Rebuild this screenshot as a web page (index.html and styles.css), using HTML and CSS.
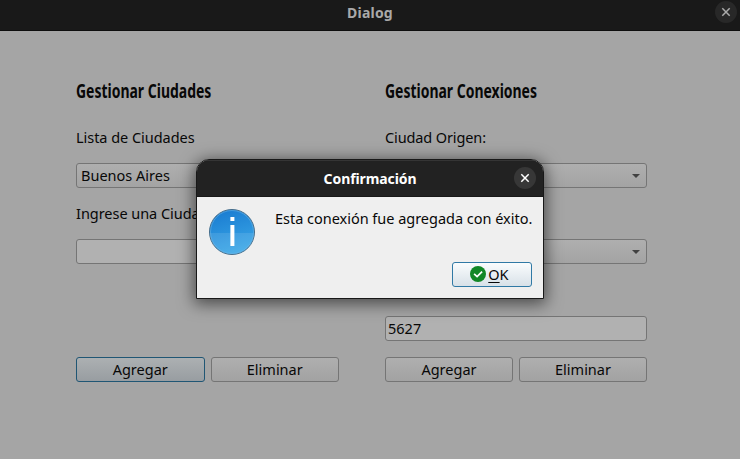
FILE: index.html
```
<!DOCTYPE html>
<html lang="es">
<head>
<meta charset="utf-8">
<title>Dialog</title>
<link rel="stylesheet" href="styles.css">
</head>
<body>
<div class="window">
  <header class="titlebar">
    <span class="window-title">Dialog</span>
    <span class="close"><svg width="22" height="22" viewBox="0 0 22 22"><path d="M7.3 7.3l7.4 7.4M14.7 7.3l-7.4 7.4"/></svg></span>
  </header>
  <main class="content">
    <section class="panel">
      <h2><span>Gestionar Ciudades</span></h2>
      <div class="label">Lista de Ciudades</div>
      <div class="field combo"><span>Buenos Aires</span></div>
      <div class="label second">Ingrese una Ciudad</div>
      <div class="field"></div>
      <div class="actions">
        <button class="focused"><span>Agregar</span></button>
        <button><span>Eliminar</span></button>
      </div>
    </section>
    <section class="panel">
      <h2><span>Gestionar Conexiones</span></h2>
      <div class="label origin">Ciudad Origen:</div>
      <div class="field combo"><i class="arrow"></i></div>
      <div class="label second"></div>
      <div class="field combo"><i class="arrow"></i></div>
      <div class="field distance"><span>5627</span></div>
      <div class="actions">
        <button><span>Agregar</span></button>
        <button><span>Eliminar</span></button>
      </div>
    </section>
  </main>
</div>
<div class="modal">
  <header class="modal-title">
    <span>Confirmación</span>
    <span class="close"><svg width="22" height="22" viewBox="0 0 22 22"><path d="M7.3 7.3l7.4 7.4M14.7 7.3l-7.4 7.4"/></svg></span>
  </header>
  <div class="modal-body">
    <svg class="info" width="48" height="48" viewBox="0 0 48 48">
      <defs>
        <linearGradient id="blue" x1="0" y1="0" x2="0.3" y2="1"><stop offset="0" stop-color="#1778cf"/><stop offset="1" stop-color="#38a5e6"/></linearGradient>
        <clipPath id="disc"><circle cx="24" cy="24" r="22.3"/></clipPath>
      </defs>
      <circle cx="24" cy="24" r="22.5" fill="url(#blue)" stroke="#456c89"/>
      <rect x="1" y="25" width="46" height="23" fill="#fff" opacity=".1" clip-path="url(#disc)"/>
      <circle cx="24" cy="24" r="21.5" fill="none" stroke="#70b9ec" stroke-opacity=".5"/>
      <path d="M22.4 9h4v4h-4zM22.4 17h4v21h-4z" fill="#fff"/>
    </svg>
    <div class="message">Esta conexión fue agregada con éxito.</div>
    <button class="ok">
      <svg width="16" height="16" viewBox="0 0 16 16"><circle cx="8" cy="8" r="8" fill="#128726"/><path d="M4.1 7.8l3 2.8 5-5" fill="none" stroke="#fff" stroke-width="1.7"/></svg>
      <span><span class="mnemonic">O</span>K</span>
    </button>
  </div>
</div>
</body>
</html>
```

FILE: styles.css
```
* { box-sizing: border-box; }
body {
  margin: 0;
  width: 740px;
  height: 459px;
  overflow: hidden;
  font: 14.5px/20px "Noto Sans", "Open Sans", sans-serif;
  color: #080808;
}
.window { height: 459px; background: #a5a5a5; }
.titlebar {
  position: relative;
  height: 31px;
  padding-top: 3px;
  background: #191919;
  border-bottom: 1px solid #0e0e0e;
  color: #a9a9a9;
  font-weight: 700;
  font-size: 14px;
  text-align: center;
}
.window-title { letter-spacing: .2px; }
.close {
  position: absolute;
  top: 1px;
  right: 3px;
  width: 22px;
  height: 22px;
  border-radius: 50%;
  background: #282828;
}
.close svg { display: block; fill: none; stroke: #ababab; stroke-width: 1.5; }
.content {
  display: grid;
  grid-template-columns: 263px 262px;
  gap: 46px;
  padding: 50px 0 0 76px;
}
.panel { display: flex; flex-direction: column; height: 301px; }
h2 { margin: 0; height: 20px; font-size: 19px; line-height: 20px; font-weight: 700; }
span, .label, .message { white-space: nowrap; }
h2 span { display: inline-block; transform-origin: 0 50%; transform: scaleX(.735); }
.label { height: 20px; margin-top: 26px; letter-spacing: -.04px; }
.origin { letter-spacing: -.12px; }
.label.second { margin-top: 15px; }
.field {
  display: flex;
  align-items: center;
  height: 25px;
  flex: none;
  margin-top: 16px;
  padding: 0 2px 2px;
  border: 1px solid #757575;
  border-radius: 3px;
  background: #b1b1b1;
}
.combo { padding: 0 6px 2px 4px; background: linear-gradient(#afafaf, #a3a3a3); }
.arrow {
  margin: 2px 0 0 auto;
  border: 4px solid transparent;
  border-top-color: #414141;
  border-bottom: 0;
}
.distance { margin-top: 52px; }
.actions { display: grid; grid-template-columns: 1fr 1fr; gap: 6px; margin-top: auto; }
button {
  height: 25px;
  padding: 0 0 2px;
  border: 1px solid #757575;
  border-radius: 3px;
  background: linear-gradient(#afafaf, #a2a2a2);
  color: inherit;
  font: inherit;
}
.focused { border-color: #205674; background: linear-gradient(#acb0b2, #989da1); }
.modal {
  position: absolute;
  left: 196px;
  top: 159px;
  width: 348px;
  height: 140px;
  border: 1px solid #181818;
  border-radius: 13px 13px 0 0;
  background: #efefef;
  overflow: hidden;
  box-shadow: 0 3px 16px 2px rgba(0,0,0,.55);
}
.modal-title {
  position: relative;
  height: 37px;
  padding-top: 8px;
  background: #222;
  border-top: 1px solid #353535;
  border-bottom: 1px solid #181818;
  color: #fff;
  font-size: 14px;
  font-weight: 700;
  text-align: center;
  letter-spacing: -.1px;
}
.modal-title .close { top: 6px; right: 7px; background: #373737; }
.modal-title .close svg { stroke: #fff; }
.modal-body {
  display: grid;
  grid-template: 54px 25px / 48px 1fr;
  column-gap: 19px;
  padding: 11px 11px 0;
}
.info { grid-row: 1; }
.message { letter-spacing: -.02px; }
.ok {
  grid-column: 2;
  justify-self: end;
  display: flex;
  align-items: center;
  gap: 2px;
  width: 80px;
  padding-left: 17px;
  border-color: #3079a5;
  background: linear-gradient(#fafcfd, #d8e1e8);
}
.mnemonic { text-decoration: underline 1px; text-underline-offset: 2px; text-decoration-skip-ink: none; }
```
